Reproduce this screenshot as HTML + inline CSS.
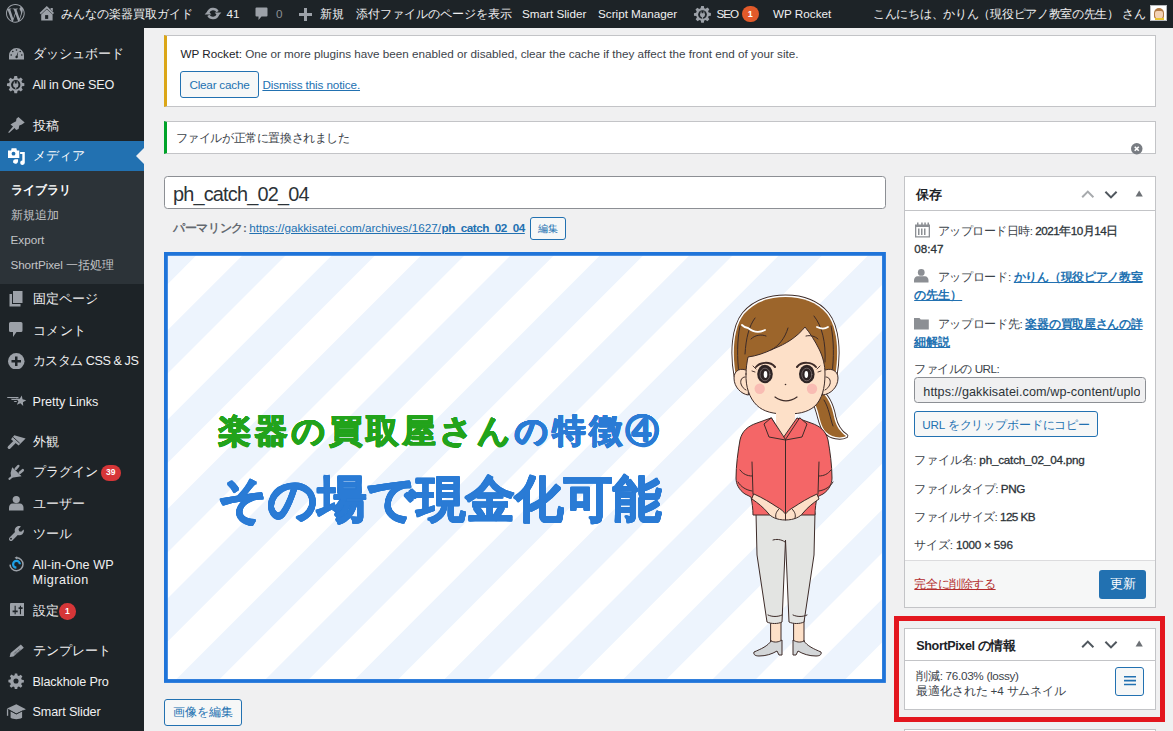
<!DOCTYPE html>
<html lang="ja">
<head>
<meta charset="utf-8">
<style>
*{margin:0;padding:0;box-sizing:border-box;}
html,body{width:1173px;height:731px;overflow:hidden;background:#f0f0f1;font-family:"Liberation Sans",sans-serif;color:#3c434a;font-size:11.7px;}
.a{position:absolute;white-space:nowrap;}
#bar{position:absolute;left:0;top:0;width:1173px;height:28px;background:#1d2327;color:#f0f0f1;}
#bar .t{position:absolute;top:0;line-height:27px;font-size:11.7px;color:#f0f0f1;white-space:nowrap;}
#menu{position:absolute;left:0;top:28px;width:144px;height:703px;background:#1d2327;}
.mi{position:absolute;left:0;width:144px;height:31px;}
.mi .t{position:absolute;left:32px;top:0;line-height:31px;font-size:11.7px;color:#f0f0f1;white-space:nowrap;}
.mi svg{position:absolute;left:7px;top:7px;width:18px;height:18px;}
.mt{position:absolute;left:32.5px;height:0;line-height:0;font-size:12.6px;color:#f0f0f1;white-space:nowrap;}
.st{position:absolute;left:10.5px;height:0;line-height:0;font-size:11.7px;color:#c3c4c7;white-space:nowrap;}
.sb{font-weight:normal;-webkit-text-stroke:0.3px currentColor;}
.tx{position:absolute;height:0;line-height:0;white-space:nowrap;}
.sub{position:absolute;left:10.5px;font-size:11.1px;color:#c3c4c7;line-height:25px;white-space:nowrap;}
.badge{position:absolute;background:#d63638;color:#fff;border-radius:9px;font-size:8.5px;font-weight:bold;text-align:center;}
.notice{position:absolute;left:164px;width:991.5px;background:#fff;border:1px solid #c3c4c7;border-left-width:3.6px;box-shadow:0 1px 1px rgba(0,0,0,.04);}
.btn{position:absolute;border:1px solid #2271b1;color:#2271b1;background:#f6f7f7;border-radius:3px;text-align:center;white-space:nowrap;}
.box{position:absolute;background:#fff;border:1px solid #c3c4c7;}
a,.lnk{color:#2271b1;text-decoration:underline;}
</style>
</head>
<body>
<div id="bar">
  <!-- wp logo -->
  <svg class="a" style="left:6.2px;top:4px" width="18.7" height="18.7" viewBox="0 0 24 24"><path fill="#9ca1a8" d="M21.469 6.825c.84 1.537 1.318 3.3 1.318 5.175 0 3.979-2.156 7.456-5.363 9.325l3.295-9.527c.615-1.54.82-2.771.82-3.864 0-.405-.026-.78-.07-1.11m-7.981.105c.647-.03 1.232-.105 1.232-.105.582-.075.514-.93-.067-.899 0 0-1.755.135-2.88.135-1.064 0-2.85-.15-2.85-.15-.585-.03-.661.855-.075.885 0 0 .54.061 1.125.09l1.68 4.605-2.37 7.08L5.354 6.9c.649-.03 1.234-.1 1.234-.1.585-.075.516-.93-.065-.896 0 0-1.746.138-2.874.138-.2 0-.438-.008-.69-.015C4.911 3.15 8.235 1.215 12 1.215c2.809 0 5.365 1.072 7.286 2.833-.046-.003-.091-.009-.141-.009-1.06 0-1.812.923-1.812 1.914 0 .89.513 1.643 1.06 2.531.411.72.89 1.643.89 2.977 0 .915-.354 1.994-.821 3.479l-1.075 3.585-3.9-11.61.001.014zM12 22.784c-1.059 0-2.081-.153-3.048-.437l3.237-9.406 3.315 9.087c.024.053.05.101.078.149-1.12.393-2.325.609-3.582.609M1.211 12c0-1.564.336-3.05.935-4.39L7.29 21.709C3.694 19.96 1.212 16.271 1.211 12M12 0C5.385 0 0 5.385 0 12s5.385 12 12 12 12-5.385 12-12S18.615 0 12 0"/></svg>
  <!-- home -->
  <svg class="a" style="left:39px;top:5px" width="16" height="16" viewBox="0 0 16 16"><path fill="#9ca1a8" d="M11.6 3h2.2v3.6l-2.2-2z"/><path fill="none" stroke="#9ca1a8" stroke-width="1.9" d="M1.2 8.6L7.8 2.2l6.6 6.4"/><path fill="#9ca1a8" d="M2.2 15.6V9.6L7.8 4.3l5.8 5.3v6z"/><path fill="#1d2327" d="M6.1 10.1h3.1v3.8H6.1z"/></svg>
  <span class="t" style="left:61px">みんなの楽器買取ガイド</span>
  <!-- updates -->
  <svg class="a" style="left:203.5px;top:5.5px" width="18" height="15" viewBox="0 0 18 15"><g fill="none" stroke="#9ca1a8" stroke-width="2.5"><path d="M4.2 6.3A5.2 5.2 0 0 1 13.6 5.6"/><path d="M13.8 8.7A5.2 5.2 0 0 1 4.4 9.4"/></g><path fill="#9ca1a8" d="M10.6 6.6h6.8l-3.4 3.6zM.6 8.4h6.8L4 4.8z"/></svg>
  <span class="t" style="left:226.5px">41</span>
  <!-- comments -->
  <svg class="a" style="left:255px;top:7px" width="13" height="14" viewBox="0 0 13 14"><path fill="#9ca1a8" d="M1.5 0.5h10a1 1 0 0 1 1 1v7a1 1 0 0 1-1 1H6.5l-3 3.5v-3.5h-2a1 1 0 0 1-1-1v-7a1 1 0 0 1 1-1z"/></svg>
  <span class="t" style="left:276px;color:#8c8f94">0</span>
  <!-- plus -->
  <svg class="a" style="left:299px;top:7.5px" width="13" height="13" viewBox="0 0 13 13"><path fill="#9ca1a8" d="M5 0h3v5h5v3H8v5H5V8H0V5h5z"/></svg>
  <span class="t" style="left:319.5px">新規</span>
  <span class="t" style="left:356px">添付ファイルのページを表示</span>
  <span class="t" style="left:522px">Smart Slider</span>
  <span class="t" style="left:598px">Script Manager</span>
  <!-- seo gear -->
  <svg class="a" style="left:692.5px;top:5px" width="19" height="19" viewBox="0 0 20 20"><path fill="#9ca1a8" d="M8.6 1h2.8l.4 2.3 1.5.6 1.9-1.3 2 2-1.3 1.9.6 1.5 2.3.4v2.8l-2.3.4-.6 1.5 1.3 1.9-2 2-1.9-1.3-1.5.6-.4 2.3H8.6l-.4-2.3-1.5-.6-1.9 1.3-2-2 1.3-1.9-.6-1.5L1 11.4V8.6l2.3-.4.6-1.5L2.6 4.8l2-2 1.9 1.3 1.5-.6z"/><circle cx="10" cy="10" r="4.6" fill="#1d2327"/><path fill="#9ca1a8" d="M8 6.8h1v2h2v-2h1v2.2h.6v1.6a2.6 2.6 0 0 1-2.1 2.5v1.4h-1v-1.4A2.6 2.6 0 0 1 7.4 10.6V9h.6z"/></svg>
  <span class="t" style="left:716.5px;letter-spacing:-1px">SEO</span>
  <span class="a" style="left:742px;top:5.5px;width:16.5px;height:16.5px;border-radius:50%;background:#e25a2a;color:#fff;font-size:9px;font-weight:bold;line-height:16.5px;text-align:center">1</span>
  <span class="t" style="left:773px">WP Rocket</span>
  <span class="t" style="left:873px;letter-spacing:-0.29px">こんにちは、かりん（現役ピアノ教室の先生） さん</span>
  <div class="a" style="left:1150px;top:5px;width:17px;height:16px;background:#fff;border:1px solid #b9bcc0;overflow:hidden">
    <div style="position:absolute;left:2.5px;top:1.5px;width:10px;height:11px;border-radius:5px 5px 3px 3px;background:#b27a45"></div>
    <div style="position:absolute;left:4px;top:4.5px;width:7.5px;height:8px;border-radius:2px 2px 4px 4px;background:#f4d2b5"></div>
    <div style="position:absolute;left:3.5px;top:12px;width:9px;height:3px;background:#e9c431"></div>
  </div>
</div>

<div id="menu">
</div>
<!-- menu items (absolute page coords) -->
<div class="a" style="left:0;top:140.5px;width:144px;height:30.2px;background:#2271b1"></div>
<div class="a" style="left:0;top:170.7px;width:144px;height:113px;background:#2c3338"></div>
<svg class="a" style="left:136px;top:148px" width="8" height="16" viewBox="0 0 8 16"><path fill="#f0f0f1" d="M8 0L0 8l8 8z"/></svg>

<div class="mt" style="top:54px">ダッシュボード</div>
<svg class="a" style="left:9px;top:48px" width="15" height="11.5" viewBox="0 0 15 11.5"><path fill="#9ca1a8" d="M7.5 0A7.5 7.5 0 0 0 0 7.5v4h15v-4A7.5 7.5 0 0 0 7.5 0z"/><g fill="#1d2327"><circle cx="7.5" cy="2" r=".8"/><circle cx="3.8" cy="3.5" r=".8"/><circle cx="11.2" cy="3.5" r=".8"/><circle cx="2.2" cy="7" r=".8"/><circle cx="12.8" cy="7" r=".8"/><path d="M9.3 3.2L7.2 8.6l1.2.4z"/><circle cx="7.6" cy="9" r="1.2"/></g></svg>

<div class="mt" style="top:84.7px;letter-spacing:-0.23px">All in One SEO</div>
<svg class="a" style="left:6.2px;top:75px" width="19.5" height="19.5" viewBox="0 0 20 20"><path fill="#9ca1a8" d="M8.6 1h2.8l.4 2.3 1.5.6 1.9-1.3 2 2-1.3 1.9.6 1.5 2.3.4v2.8l-2.3.4-.6 1.5 1.3 1.9-2 2-1.9-1.3-1.5.6-.4 2.3H8.6l-.4-2.3-1.5-.6-1.9 1.3-2-2 1.3-1.9-.6-1.5L1 11.4V8.6l2.3-.4.6-1.5L2.6 4.8l2-2 1.9 1.3 1.5-.6z"/><circle cx="10" cy="10" r="4.8" fill="#1d2327"/><path fill="#9ca1a8" d="M8 6.6h1v2h2v-2h1v2.2h.7v1.6a2.7 2.7 0 0 1-2.2 2.6v1.5h-1v-1.5A2.7 2.7 0 0 1 7.3 10.4V8.8H8z"/></svg>

<div class="mt" style="top:125.5px">投稿</div>
<svg class="a" style="left:8px;top:117px" width="17" height="17" viewBox="0 0 17 17"><path fill="#9ca1a8" d="M10.4.1L16.7 5.5 13.9 7.4 11.3 8.6 10.6 12 8.1 12.9 6.6 10.9 1 15.9.2 15.3 5 9.6 2.5 7.5 4.9 5.9 8.1 4.3 8.4 1.7z"/></svg>

<div class="mt" style="top:155.8px;color:#fff">メディア</div>
<svg class="a" style="left:8px;top:148px" width="17" height="17" viewBox="0 0 17 17"><path fill="#fff" d="M0 2.6h3.1L3.6.2h4.8l.5 2.4h2.4v7.3H0z"/><circle cx="5.5" cy="5.7" r="1.9" fill="#2271b1"/><path fill="#fff" d="M12.1 4h4.7v10.8a2.3 2.2 0 1 1-2.5-2.2V6H12.1z"/><path fill="#fff" d="M10 11.2v0c0 0 .3 2.2-.3 3.4a2.5 2.3 0 1 1-1.9-3.4z"/></svg>

<div class="st" style="top:189.6px;color:#fff;font-weight:bold">ライブラリ</div>
<div class="st" style="top:214.9px">新規追加</div>
<div class="st" style="top:240px">Export</div>
<div class="st" style="top:265px;letter-spacing:-0.1px">ShortPixel 一括処理</div>

<div class="mt" style="top:299.4px">固定ページ</div>
<svg class="a" style="left:9px;top:291px" width="14" height="16" viewBox="0 0 14 16"><path fill="#9ca1a8" d="M4 0h9.5v12H4z"/><path fill="#9ca1a8" d="M.5 3H3v10h8.5v2.5h-11z"/></svg>

<div class="mt" style="top:330.5px;letter-spacing:0.5px">コメント</div>
<svg class="a" style="left:9.3px;top:322.4px" width="13.5" height="15" viewBox="0 0 13.5 15"><path fill="#9ca1a8" d="M1.5 0h10.5a1.5 1.5 0 0 1 1.5 1.5v7a1.5 1.5 0 0 1-1.5 1.5H7.5L4 15v-5H1.5A1.5 1.5 0 0 1 0 8.5v-7A1.5 1.5 0 0 1 1.5 0z"/></svg>

<div class="mt" style="top:361.3px;letter-spacing:-0.43px">カスタム CSS &amp; JS</div>
<svg class="a" style="left:8px;top:352.6px" width="16.5" height="16.5" viewBox="0 0 16.5 16.5"><circle cx="8.25" cy="8.25" r="8.25" fill="#9ca1a8"/><path fill="#1d2327" d="M7 3.5h2.5V7h3.5v2.5H9.5V13H7V9.5H3.5V7H7z"/></svg>

<div class="mt" style="top:401.7px">Pretty Links</div>
<svg class="a" style="left:4px;top:388px" width="24" height="24" viewBox="0 0 24 24"><polygon fill="#9ca1a8" points="17.76,7.58 18.53,11.33 22.25,12.23 18.92,14.13 19.21,17.94 16.38,15.36 12.84,16.82 14.42,13.33 11.94,10.42 15.75,10.84"/><path fill="#9ca1a8" d="M2.8 8.9h11.6l.2 1.2H3.6zM6.6 10.8h6.2l.2 1.1H8zM9.6 13h3.2l-.2 1H10.6z"/></svg>

<div class="mt" style="top:442px">外観</div>
<svg class="a" style="left:4px;top:430px" width="24" height="24" viewBox="0 0 24 24"><path fill="#9ca1a8" d="M10.3 5.2L21.6 8.4 14.6 15.5 7 9.3z"/><path stroke="#1d2327" stroke-width="0.9" d="M9.2 7.3L15.7 13.2"/><path stroke="#9ca1a8" stroke-width="3.2" stroke-linecap="round" d="M10.2 12.3L5.2 17.4"/></svg>

<div class="mt" style="top:472.4px">プラグイン</div>
<span class="badge" style="left:101px;top:465px;width:19.5px;height:15.5px;line-height:15.5px">39</span>
<svg class="a" style="left:4px;top:460px" width="24" height="24" viewBox="0 30 24 24"><path fill="#9ca1a8" d="M8.2 37.2L17.6 46.2 9.4 47.6 7.2 47.6 6.6 43z"/><path stroke="#9ca1a8" stroke-width="2" stroke-linecap="round" d="M8 46.8L5.4 48.9"/><path stroke="#9ca1a8" stroke-width="2.5" stroke-linecap="round" d="M11.8 38.8L14.3 36M15.9 42.8L18.8 40.2"/></svg>

<div class="mt" style="top:503.8px">ユーザー</div>
<svg class="a" style="left:9.3px;top:496px" width="14.5" height="14.6" viewBox="0 0 14.5 14.6"><circle cx="7.25" cy="3.6" r="3.6" fill="#9ca1a8"/><path fill="#9ca1a8" d="M3.5 7.5h7.5c2 0 3.5 2 3.5 4.2v2.9H0v-2.9C0 9.5 1.5 7.5 3.5 7.5z"/></svg>

<div class="mt" style="top:533.6px">ツール</div>
<svg class="a" style="left:8.8px;top:525.5px" width="15" height="15" viewBox="0 0 15 15"><path fill="#9ca1a8" d="M14.6 3.4l-2.4 2.3-2.1-.5-.6-2.2L11.9.5c-1.8-.9-4-.4-5.3 1.2-1 1.3-1.2 3-.6 4.4L.6 11.6c-.8.8-.8 2 0 2.8.8.8 2 .8 2.8 0l5.4-5.5c1.5.7 3.3.4 4.6-.7 1.4-1.3 1.8-3.3 1.2-4.8zM2 13.6a.9.9 0 1 1 0-1.8.9.9 0 0 1 0 1.8z"/></svg>

<div class="mt" style="top:565.2px;letter-spacing:0.12px">All-in-One WP</div>
<div class="mt" style="top:580.2px;letter-spacing:0.5px">Migration</div>
<svg class="a" style="left:8.5px;top:556px" width="16" height="17" viewBox="0 0 16 17"><path fill="none" stroke="#9ca1a8" stroke-width="1.5" d="M7.6 1.8A6.5 6.5 0 1 1 1 8.6"/><path fill="#9ca1a8" d="M5.6 1.8l2.6-1.6v3.2z"/><path fill="none" stroke="#1ea1e6" stroke-width="2.2" d="M10.9 8.3A3.4 3.4 0 1 0 7.4 11.7"/></svg>

<div class="mt" style="top:610.8px">設定</div>
<span class="badge" style="left:59px;top:603px;width:16.5px;height:16.5px;line-height:16.5px;border-radius:50%">1</span>
<svg class="a" style="left:9.5px;top:603.2px" width="14.5" height="13.3" viewBox="0 0 14.5 13.3"><rect width="14.5" height="13.3" rx="1" fill="#9ca1a8"/><path fill="#1d2327" d="M4.6 2.8h1.1v8.4H4.6zM2.6 7.4h5.1v1.9H2.6zM9.9 2.8H11v8.4H9.9zM8.6 4.3h4v1.8h-4z"/></svg>

<div class="mt" style="top:651.3px">テンプレート</div>
<svg class="a" style="left:4px;top:638px" width="24" height="24" viewBox="4 638 24 24"><path fill="#9ca1a8" d="M9.6 656.9L13.4 656.5 23.8 647.8 20.9 644.4 10.6 653.1z"/><path fill="none" stroke="#1d2327" stroke-width="0.7" stroke-width="0.9" stroke-dasharray="1 0.8" d="M13.8 653.6L19.6 648.8M14.7 654.7L20.5 649.9"/></svg>

<div class="mt" style="top:681.6px;letter-spacing:-0.12px">Blackhole Pro</div>
<svg class="a" style="left:8px;top:673.3px" width="16" height="16" viewBox="0 0 20 20"><path fill="#9ca1a8" d="M8.5.5h3l.5 2.6 1.7.7 2.2-1.5 2.1 2.1-1.5 2.2.7 1.7 2.6.5v3l-2.6.5-.7 1.7 1.5 2.2-2.1 2.1-2.2-1.5-1.7.7-.5 2.6h-3l-.5-2.6-1.7-.7-2.2 1.5-2.1-2.1 1.5-2.2-.7-1.7L.5 11.5v-3l2.6-.5.7-1.7L2.3 4.1l2.1-2.1 2.2 1.5 1.7-.7z"/><circle cx="10" cy="10" r="3.2" fill="#1d2327"/></svg>

<div class="mt" style="top:712px;letter-spacing:-0.1px">Smart Slider</div>
<svg class="a" style="left:4px;top:700px" width="24" height="24" viewBox="4 700 24 24"><path fill="#9ca1a8" d="M10.6 711.2l5.7 3 5.8-3v6.6c-1.7 1-3.7 1.4-5.8 1.4s-4.1-.4-5.7-1.4z"/><path fill="#9ca1a8" d="M7 708.6L16.3 704.3 25.9 709.2 16.3 713.6z"/><path fill="#9ca1a8" d="M6.9 709.2h1.3v6.6H6.9z"/><path fill="none" stroke="#1d2327" stroke-width="0.8" d="M8.4 709.6l7.9 4.4 7.2-3.6"/></svg>

<!-- notices -->
<div class="a" style="left:164px;top:35.3px;width:991.6px;height:72.2px;background:#fff;border:1px solid #c3c4c7;border-left:3.4px solid #dba617"></div>
<div class="tx" style="left:180.4px;top:54.2px"><span style="color:#1d2327">WP Rocket:</span> One or more plugins have been enabled or disabled, clear the cache if they affect the front end of your site.</div>
<div class="btn" style="left:180.4px;top:71.2px;width:78.2px;height:26.6px;line-height:26px;letter-spacing:-0.2px">Clear cache</div>
<div class="tx lnk" style="left:262.4px;top:85.2px;letter-spacing:-0.12px">Dismiss this notice.</div>

<div class="a" style="left:164px;top:121.2px;width:991.6px;height:32.4px;background:#fff;border:1px solid #c3c4c7;border-left:3.4px solid #00a32a"></div>
<div class="tx" style="left:175.5px;top:138.2px;letter-spacing:-0.4px">ファイルが正常に置換されました</div>
<svg class="a" style="left:1131.3px;top:143.2px" width="11.5" height="11.5" viewBox="0 0 12 12"><circle cx="6" cy="6" r="6" fill="#787c82"/><path stroke="#fff" stroke-width="1.7" d="M3.9 3.9l4.2 4.2M8.1 3.9L3.9 8.1"/></svg>

<!-- title -->
<div class="a" style="left:164.4px;top:176.3px;width:721.2px;height:33.2px;background:#fff;border:1px solid #8c8f94;border-radius:3.5px"></div>
<div class="tx" style="left:172.9px;top:194px;font-size:19.9px;color:#2c3338;letter-spacing:-0.8px">ph_catch_02_04</div>

<!-- permalink -->
<div class="tx" style="left:172.9px;top:228px;color:#646970;font-weight:bold;letter-spacing:-0.3px">パーマリンク:</div>
<div class="tx lnk" id="pl1" style="left:249.3px;top:228px">https://gakkisatei.com/archives/1627/</div>
<div class="tx lnk" id="pl2" style="left:441.5px;top:228px;font-weight:bold;letter-spacing:-0.5px">ph_catch_02_04</div>
<div class="btn" style="left:530.3px;top:217.3px;width:35.5px;height:23.2px;line-height:21px;font-size:9.5px">編集</div>

<!-- image -->
<div class="a" id="img" style="left:164.1px;top:251.9px;width:721.9px;height:430.9px;background:#fff;overflow:hidden">
<svg class="a" style="left:0;top:0" width="721.9" height="430.9" viewBox="0 0 721.9 430.9"><polygon fill="#edf4fd" points="-186.4,0 -143.1,0 -574.0,430.9 -617.3,430.9"/><polygon fill="#edf4fd" points="-97.0,0 -53.7,0 -484.6,430.9 -527.9,430.9"/><polygon fill="#edf4fd" points="-7.6,0 35.7,0 -395.2,430.9 -438.5,430.9"/><polygon fill="#edf4fd" points="81.8,0 125.1,0 -305.8,430.9 -349.1,430.9"/><polygon fill="#edf4fd" points="171.2,0 214.5,0 -216.4,430.9 -259.7,430.9"/><polygon fill="#edf4fd" points="260.6,0 303.9,0 -127.0,430.9 -170.3,430.9"/><polygon fill="#edf4fd" points="350.0,0 393.3,0 -37.6,430.9 -80.9,430.9"/><polygon fill="#edf4fd" points="439.4,0 482.7,0 51.8,430.9 8.5,430.9"/><polygon fill="#edf4fd" points="528.8,0 572.1,0 141.2,430.9 97.9,430.9"/><polygon fill="#edf4fd" points="618.2,0 661.5,0 230.6,430.9 187.3,430.9"/><polygon fill="#edf4fd" points="707.6,0 750.9,0 320.0,430.9 276.7,430.9"/><polygon fill="#edf4fd" points="797.0,0 840.3,0 409.4,430.9 366.1,430.9"/><polygon fill="#edf4fd" points="886.4,0 929.7,0 498.8,430.9 455.5,430.9"/><polygon fill="#edf4fd" points="975.8,0 1019.1,0 588.2,430.9 544.9,430.9"/><polygon fill="#edf4fd" points="1065.2,0 1108.5,0 677.6,430.9 634.3,430.9"/>
<rect x="1.9" y="1.9" width="718.1" height="427.1" fill="none" stroke="#1f74d9" stroke-width="3.8"/>
</svg>
<div class="tx" style="left:54px;top:179px;font-size:32.5px;font-weight:bold;color:#22a31b;letter-spacing:3.7px;text-shadow:0.50px 0.00px 0 #22a31b,0.43px 0.25px 0 #22a31b,0.25px 0.43px 0 #22a31b,0.00px 0.50px 0 #22a31b,-0.25px 0.43px 0 #22a31b,-0.43px 0.25px 0 #22a31b,-0.50px 0.00px 0 #22a31b,-0.43px -0.25px 0 #22a31b,-0.25px -0.43px 0 #22a31b,-0.00px -0.50px 0 #22a31b,0.25px -0.43px 0 #22a31b,0.43px -0.25px 0 #22a31b">楽器の買取屋さん<span style="color:#2a7bd5;text-shadow:0.50px 0.00px 0 #2a7bd5,0.43px 0.25px 0 #2a7bd5,0.25px 0.43px 0 #2a7bd5,0.00px 0.50px 0 #2a7bd5,-0.25px 0.43px 0 #2a7bd5,-0.43px 0.25px 0 #2a7bd5,-0.50px 0.00px 0 #2a7bd5,-0.43px -0.25px 0 #2a7bd5,-0.25px -0.43px 0 #2a7bd5,-0.00px -0.50px 0 #2a7bd5,0.25px -0.43px 0 #2a7bd5,0.43px -0.25px 0 #2a7bd5">の特徴④</span></div>
<div class="tx" style="left:53.5px;top:247px;font-size:48.5px;font-weight:bold;color:#2a7bd5;letter-spacing:0px;text-shadow:0.90px 0.00px 0 #2a7bd5,0.78px 0.45px 0 #2a7bd5,0.45px 0.78px 0 #2a7bd5,0.00px 0.90px 0 #2a7bd5,-0.45px 0.78px 0 #2a7bd5,-0.78px 0.45px 0 #2a7bd5,-0.90px 0.00px 0 #2a7bd5,-0.78px -0.45px 0 #2a7bd5,-0.45px -0.78px 0 #2a7bd5,-0.00px -0.90px 0 #2a7bd5,0.45px -0.78px 0 #2a7bd5,0.78px -0.45px 0 #2a7bd5">その場で現金化可能</div>
</div>
<!-- woman -->
<svg class="a" style="left:700px;top:285px" width="160" height="385" viewBox="700 285 160 385">
<g stroke="#3d2b28" stroke-width="1" stroke-linejoin="round" stroke-linecap="round">
 <!-- ponytail -->
 <path fill="#9c652b" stroke="#3d2b28" stroke-width="4.6" d="M819 390c9 6 13 16 15 27 2 9 6 15 12 19-6 3-15 1-20-4-5-5-6-13-8-20-2-7-4-11-8-14z"/>
 <path fill="#9c652b" stroke="#fff" stroke-width="2.8" d="M819 390c9 6 13 16 15 27 2 9 6 15 12 19-6 3-15 1-20-4-5-5-6-13-8-20-2-7-4-11-8-14z"/>
 <path fill="#9c652b" stroke="none" d="M819 390c9 6 13 16 15 27 2 9 6 15 12 19-6 3-15 1-20-4-5-5-6-13-8-20-2-7-4-11-8-14z"/>
 <path fill="none" d="M824 400c5 8 6 18 9 26"/>
 <!-- hair back with white outline -->
 <path fill="#9c652b" stroke="#3d2b28" stroke-width="4.8" d="M736 376c-4-22-3-48 8-62 10-12 25-17 41.5-17s31.5 5 41.5 17c11 14 12 40 8 62z"/>
 <path fill="#9c652b" stroke="#fff" stroke-width="3" d="M736 376c-4-22-3-48 8-62 10-12 25-17 41.5-17s31.5 5 41.5 17c11 14 12 40 8 62z"/>
 <path fill="#9c652b" stroke="none" d="M736 376c-4-22-3-48 8-62 10-12 25-17 41.5-17s31.5 5 41.5 17c11 14 12 40 8 62z"/>
 <path fill="none" d="M740 326c-3 14-3 32 -1 48M831 326c3 14 3 32 1 48"/>
 <!-- ears -->
 <path fill="#fde0c8" d="M748 371c-7-4-14-1-14 7 0 9 7 16 14 17z"/>
 <path fill="none" d="M745 377c-3 0-5 3-4 7 1 3 3 5 5 6"/>
 <path fill="#fde0c8" d="M823 371c7-4 15-1 15 7 0 9-7 16-15 17z"/>
 <path fill="none" d="M826 377c3 0 5 3 4 7-1 3-3 5-5 6"/>
 <!-- face with hairline -->
 <path fill="#fde0c8" d="M746 374c0-6 1-12 2-17 8-1 17-4 25-8 13-5 24-12 32-22 5 6 10 14 14 22 4 8 6 16 6 25 0 14-3 25-10 32-8 7-18 8-29.5 8s-22-2-29-9c-7-7-11-18-10.5-31z"/>
 <path fill="none" d="M788 328c-3 10-9 18-17 22M751 339c4-4 10-5 15-3M806 336c4-1 9 0 12 3M755 318c-6 8-9 20-10 36M814 316c8 10 12 26 11 46"/>
 <path fill="none" stroke="#fff" stroke-width="1.8" d="M742 325c2 2 4 3 6 3M748 328c5 4 11 5 17 2M817 327c4 2 8 2 11 0"/>
 <!-- eyes -->
 <ellipse cx="765" cy="374" rx="7.8" ry="9.2" fill="#2e2424" stroke="none"/>
 <ellipse cx="806.8" cy="374" rx="7.8" ry="9.2" fill="#2e2424" stroke="none"/>
 <ellipse cx="765" cy="374.5" rx="5" ry="6.3" fill="none" stroke="#8a7c7c" stroke-width=".7"/>
 <ellipse cx="806.8" cy="374.5" rx="5" ry="6.3" fill="none" stroke="#8a7c7c" stroke-width=".7"/>
 <ellipse cx="765.5" cy="374.5" rx="1.8" ry="3.4" fill="#fff" stroke="none"/>
 <ellipse cx="806.3" cy="374.5" rx="1.8" ry="3.4" fill="#fff" stroke="none"/>
 <path fill="none" stroke-width="2" d="M756 367c4-5 14-6 19 0M797 367c5-6 15-5 19 0"/>
 <path fill="none" stroke-width=".9" d="M756 369l-3-3M755 372l-3-1M817 369l3-3M818 372l3-1"/>
 <!-- cheeks -->
 <circle cx="759.7" cy="388.7" r="5.2" fill="#f9bcb3" stroke="none"/>
 <circle cx="812" cy="388.7" r="5.2" fill="#f9bcb3" stroke="none"/>
 <circle cx="785.5" cy="384.5" r=".8" fill="#3d2b28" stroke="none"/>
 <path fill="none" stroke-width="1.2" d="M775 397c7 5 15 5 22 0"/>
 <!-- neck -->
 <path fill="#fde0c8" d="M776 408h19v34h-19z" stroke="none"/>
 <!-- ankles -->
 <path fill="#fde0c8" d="M771 618h10v26h-10zM794 618h10v26h-10z"/>
 <!-- shoes -->
 <path fill="#d3d6d8" d="M771 641c-3 5-10 8-17 11-1 3 2 4 5 4 7 0 13-2 18-5l2 4h3v-15c-3 2-7 3-11 1z"/>
 <path fill="#d3d6d8" d="M804 641c3 5 10 8 17 11 1 3-2 4-5 4-7 0-13-2-18-5l-2 4h-3v-15c3 2 7 3 11 1z"/>
 <!-- pants -->
 <path fill="#e3e4e2" d="M756 513l1 42 10 67c4 2 11 2 15 0l3.5-82 3.5 82c4 2 11 2 15 0l10-67 1-42z"/>
 <path fill="none" d="M773 540c3-1 8-1 12 2M768 615c4 2 10 2 14 0M793 615c4 2 10 2 14 0"/>
 <!-- shirt body -->
 <path fill="#f46667" d="M771 418l-14 5c-9 3-15 8-17 17-2 11-4 26-4 38 0 6 3 12 9 16l6 3c1 5 2 12 2 18h62c0-6 1-13 2-18l6-3c6-4 9-10 9-16 0-12-2-27-4-38-2-9-8-14-17-17l-14-5-14 20z"/>
 <path fill="none" d="M785.5 440v73M752 462l1 32M819 462l-1 32M738 482c3 5 8 8 14 9M833 482c-3 5-8 8-14 9M740 470c3 4 7 6 12 6M831 470c-3 4-7 6-12 6"/>
 <!-- collar -->
 <path fill="#f46667" d="M771 418l-7 6 5 13 16.5 3zM800 418l7 6-5 13-16.5 3z"/>
 <!-- hands -->
 <path fill="#fde0c8" d="M754 494c9 4 17 9 23 13 4 2 7 5 8.5 7 1.5-2 4.5-5 8.5-7 6-4 14-9 23-13l2 5c-6 4-12 9-16 14-3 4-9 7-17.5 7s-14.5-3-17.5-7c-4-5-10-10-16-14z"/>
 <path fill="none" d="M785.5 512v8M779 509c-3 3-4 6-3 9M792 509c3 3 4 6 3 9"/>
</g>
</svg>

<div class="btn" style="left:164px;top:699px;width:77.8px;height:26.7px;line-height:24.6px">画像を編集</div>

<!-- save box -->
<div class="box" style="left:904.4px;top:176.4px;width:251.2px;height:432px"></div>
<div class="a" style="left:905.4px;top:209.6px;width:249.2px;height:1px;background:#c3c4c7"></div>
<div class="tx" style="left:916.4px;top:194.5px;font-weight:bold;color:#1d2327;font-size:12.6px">保存</div>
<svg class="a" style="left:1081px;top:187.5px" width="64" height="11" viewBox="0 0 64 11"><path fill="none" stroke="#a7aaad" stroke-width="2" d="M1.2 9.2l5.6-5.6 5.6 5.6"/><path fill="none" stroke="#50575e" stroke-width="2" d="M24.4 3.8l5.6 5.6 5.6-5.6"/><path fill="#6c7075" d="M58.2 2.6l3.6 6h-7.2z"/></svg>

<svg class="a" style="left:914.5px;top:222px" width="15" height="15.5" viewBox="0 0 15 15.5"><path fill="#8c8f94" d="M0 2.5h2v-2h1.5v2h2.7v-2h1.5v2h1.6v-2h1.5v2h1.7v-2h1.5v2H15v13H0zM1.3 5v9.2h12.4V5zM3 6.5h1.5v6.5H3zm3 0h1.5v6.5H6zm3 0h1.5v6.5H9z"/></svg>
<div class="tx" style="left:937.7px;top:231px;letter-spacing:-0.5px">アップロード日時: <b class="sb" style="color:#2c3338">2021年10月14日</b></div>
<div class="tx sb" style="left:914.2px;top:248.8px;color:#2c3338">08:47</div>

<svg class="a" style="left:914.4px;top:269.4px" width="14.5" height="13.6" viewBox="0 0 14.5 13.6"><circle cx="7.25" cy="3.4" r="3.4" fill="#8c8f94"/><path fill="#8c8f94" d="M3.5 7.2h7.5c2 0 3.5 1.8 3.5 4v2.4H0v-2.4c0-2.2 1.5-4 3.5-4z"/></svg>
<div class="tx" style="left:937.7px;top:276.5px;letter-spacing:-0.3px">アップロード: <b class="lnk">かりん（現役ピアノ教室</b></div>
<div class="tx lnk" style="left:914.2px;top:294.9px;font-weight:bold">の先生）</div>

<svg class="a" style="left:914.4px;top:318px" width="14.8" height="11.5" viewBox="0 0 14.8 11.5"><path fill="#8c8f94" d="M0 0h5.5l1.2 1.5h8.1v10H0z"/></svg>
<div class="tx" style="left:937.7px;top:324.1px;letter-spacing:-0.3px">アップロード先: <b class="lnk">楽器の買取屋さんの詳</b></div>
<div class="tx lnk" style="left:914.2px;top:342.3px;font-weight:bold">細解説</div>

<div class="tx" style="left:914.4px;top:369.4px;letter-spacing:-0.5px">ファイルの URL:</div>
<div class="a" style="left:914.4px;top:377.2px;width:231.2px;height:26.1px;background:#f0f0f1;border:1px solid #8c8f94;border-radius:3.5px;overflow:hidden"></div>
<div class="tx" style="left:923.3px;top:391.6px;font-size:12.6px;color:#2c3338;letter-spacing:0.1px;width:217px;overflow:hidden;height:16px;line-height:16px;margin-top:-8px">https://gakkisatei.com/wp-content/uploads/2021/10/ph_catch_02_04.png</div>
<div class="btn" style="left:914.4px;top:411px;width:183.3px;height:26.4px;line-height:25.4px;letter-spacing:-0.15px">URL をクリップボードにコピー</div>

<div class="tx" style="left:914.4px;top:459.6px;letter-spacing:-0.22px">ファイル名: <b class="sb" style="color:#2c3338">ph_catch_02_04.png</b></div>
<div class="tx" style="left:914.4px;top:488.8px;letter-spacing:-0.45px">ファイルタイプ: <b class="sb" style="color:#2c3338">PNG</b></div>
<div class="tx" style="left:914.4px;top:516.5px;letter-spacing:-0.55px">ファイルサイズ: <b class="sb" style="color:#2c3338">125 KB</b></div>
<div class="tx" style="left:914.4px;top:545.4px;letter-spacing:-0.2px">サイズ: <b class="sb" style="color:#2c3338">1000 × 596</b></div>

<div class="a" style="left:905.4px;top:560.4px;width:249.2px;height:47.1px;background:#f6f7f7;border-top:1px solid #dcdcde"></div>
<div class="tx" style="left:914.4px;top:584.1px;letter-spacing:-0.4px;color:#b32d2e;text-decoration:underline">完全に削除する</div>
<div class="a" style="left:1099px;top:570.2px;width:47px;height:28.8px;background:#2271b1;border-radius:3px;color:#fff;text-align:center;line-height:28.8px;font-size:12.6px">更新</div>

<!-- red highlight -->
<div class="a" style="left:894.3px;top:615.5px;width:270.7px;height:106.3px;border:5.6px solid #e3161e"></div>
<!-- shortpixel box -->
<div class="box" style="left:904.3px;top:627.5px;width:251.4px;height:82.5px"></div>
<div class="a" style="left:905.3px;top:660px;width:249.4px;height:1px;background:#c3c4c7"></div>
<div class="tx" style="left:916.3px;top:645.5px;letter-spacing:-0.4px;font-weight:bold;color:#1d2327;font-size:12.6px">ShortPixel の情報</div>
<svg class="a" style="left:1081px;top:638px" width="64" height="11" viewBox="0 0 64 11"><path fill="none" stroke="#50575e" stroke-width="2" d="M1.2 9.2l5.6-5.6 5.6 5.6"/><path fill="none" stroke="#50575e" stroke-width="2" d="M24.4 3.8l5.6 5.6 5.6-5.6"/><path fill="#6c7075" d="M58.2 2.6l3.6 6h-7.2z"/></svg>
<div class="tx" style="left:916.3px;top:675.5px;letter-spacing:-0.3px">削減: 76.03% (lossy)</div>
<div class="tx" style="left:916.3px;top:691.3px;letter-spacing:-0.15px">最適化された +4 サムネイル</div>
<div class="btn" style="left:1115.2px;top:667px;width:28.5px;height:28.8px"></div>
<svg class="a" style="left:1123.6px;top:676.2px" width="12.5" height="9.4" viewBox="0 0 12.5 9.4"><path fill="#2271b1" d="M0 0h12.5v1.4H0zm0 3.7h12.5v1.8H0zm0 4h12.5v1.5H0z"/></svg>
<!-- next box top -->
<div class="box" style="left:904.3px;top:729.3px;width:251.4px;height:10px"></div>
</body>
</html>
